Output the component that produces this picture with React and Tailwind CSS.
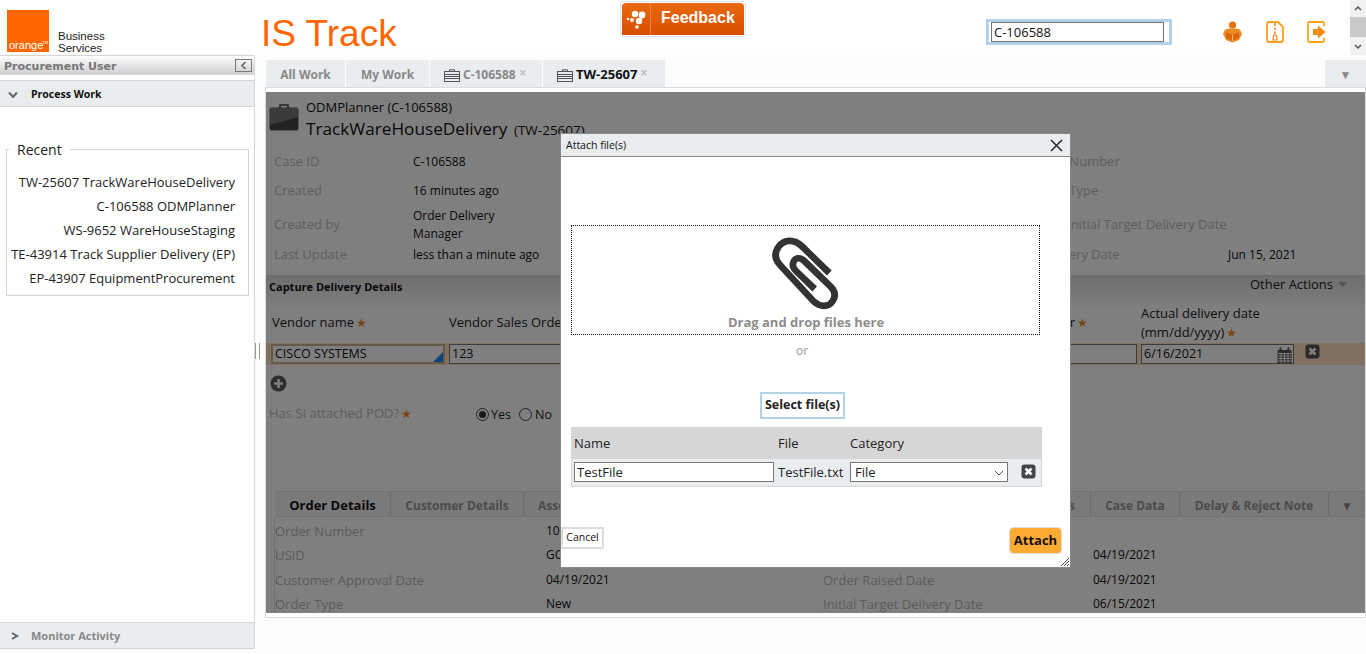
import React from 'react';

const recent = [
  'TW-25607 TrackWareHouseDelivery',
  'C-106588 ODMPlanner',
  'WS-9652 WareHouseStaging',
  'TE-43914 Track Supplier Delivery (EP)',
  'EP-43907 EquipmentProcurement',
];

const Chevron = ({ dir = 'down', className = '' }) => (
  <svg width="10" height="8" viewBox="0 0 10 8" className={className}>
    <path
      d={dir === 'down' ? 'M1 1.5 L5 6 L9 1.5' : 'M2 1 L7 4 L2 7'}
      fill="none"
      stroke="#666"
      strokeWidth="2"
    />
  </svg>
);

const CloseBox = ({ fill = '#444' }) => (
  <svg width="15" height="15" viewBox="0 0 15 15">
    <rect x="0.5" y="0.5" width="14" height="14" rx="3" fill={fill} />
    <path d="M4.5 4.5 L10.5 10.5 M10.5 4.5 L4.5 10.5" stroke="#fff" strokeWidth="2.6" />
  </svg>
);

const TabCase = () => (
  <svg width="16" height="13" viewBox="0 0 16 13" className="mr-[3px]">
    <path d="M5.5 2 V0.8 H10.5 V2" fill="none" stroke="#555" strokeWidth="1" />
    <rect x="0.5" y="2.5" width="15" height="10" fill="none" stroke="#555" strokeWidth="1" />
    <path d="M1 5.5 H15 M1 7.5 H15 M1 9.5 H15" stroke="#555" strokeWidth="1" />
  </svg>
);

const Req = () => <span className="text-[#f08a1d] text-[12px] ml-[2px]">★</span>;

const InfoRow = ({ h, label, value, rightLabel, rightPad, rightValue }) => (
  <div className={`flex items-center ${h}`}>
    <div className="w-[139px] text-[13px] text-[#bcbcbc]">{label}</div>
    <div className="w-[617px] text-[12px] text-[#111] leading-[18px]">{value}</div>
    <div className={`w-[198px] text-[13px] text-[#bcbcbc] whitespace-nowrap ${rightPad}`}>{rightLabel}</div>
    <div className="text-[12px] text-[#111]">{rightValue}</div>
  </div>
);

const DetailRow = ({ label, value, label2, value2 }) => (
  <div className="flex items-center h-[24.3px] leading-[16px]">
    <div className="w-[271px] text-[#b8b8b8] text-[13px]">{label}</div>
    <div className="w-[277px] text-[#111] text-[12px]">{value}</div>
    <div className="w-[270px] text-[#b8b8b8] text-[13px]">{label2}</div>
    <div className="text-[#111] text-[12px]">{value2}</div>
  </div>
);

const Modal = () => (
  <div className="absolute left-[560px] top-[133px] w-[511px] h-[435px] bg-white border border-[#888] flex flex-col text-[#222]">
    <div className="h-[23px] shrink-0 bg-[#e9edf0] border-b border-[#888] flex items-center justify-between pl-[5px] pr-[7px] text-[10.5px] text-[#111]">
      <span className="pt-[1px]">Attach file(s)</span>
      <svg width="13" height="13" viewBox="0 0 13 13">
        <path d="M1 1 L12 12 M12 1 L1 12" stroke="#222" strokeWidth="1.5" />
      </svg>
    </div>

    <div className="mt-[68px] ml-[10px] w-[469px] h-[110px] border border-dotted border-[#111] flex flex-col items-center shrink-0">
      <svg width="70" height="77" viewBox="630 310 210 231" className="mt-[9px] mb-[1px] ml-[-2px]">
        <path
          d="M808 424 L725 343 C703 322 672 322 656 345 C641 366 646 385 660 400 L762 510 C780 527 805 527 817 510 C829 493 825 478 812 465 L733 388 C720 375 705 378 700 392 C696 403 700 410 708 418 L764 472"
          fill="none"
          stroke="#333"
          strokeWidth="20"
        />
      </svg>
      <div className="text-[13px] font-bold text-[#8c8c8c] leading-[18px] ml-[1px]">Drag and drop files here</div>
    </div>

    <div className="ml-[235px] mt-[7px] text-[12px] text-[#999] leading-[18px]">or</div>

    <button className="ml-[199px] mt-[32px] w-[85px] h-[27px] border-2 border-[#b1d2e8] bg-white text-[12.5px] font-bold text-[#222]">
      Select file(s)
    </button>

    <div className="ml-[10px] mt-[8px] w-[471px] text-[13px]">
      <div className="h-[31px] bg-[#d6d6d6] flex items-center pl-[3px] pt-[2px]">
        <div className="w-[204px]">Name</div>
        <div className="w-[72px]">File</div>
        <div>Category</div>
      </div>
      <div className="h-[29px] bg-[#e9edf0] border border-[#d6d6d6] flex items-center pl-[2px]">
        <input
          readOnly
          defaultValue="TestFile"
          className="w-[200px] h-[20px] -mt-[1px] bg-white border border-[#777] px-[2px] text-[13px] outline-none"
        />
        <div className="w-[76px] pl-[4px] whitespace-nowrap">TestFile.txt</div>
        <div className="relative w-[158px] h-[20px] -mt-[1px]">
          <select className="w-full h-full appearance-none bg-white border border-[#777] pl-[4px] text-[13px] outline-none">
            <option>File</option>
          </select>
          <svg width="10" height="6" viewBox="0 0 10 6" className="absolute right-[4px] top-[8px]">
            <path d="M1 1 L5 5 L9 1" fill="none" stroke="#555" strokeWidth="1" />
          </svg>
        </div>
        <div className="ml-[13px] -mt-[2px]">
          <CloseBox />
        </div>
      </div>
    </div>

    <div className="flex items-start justify-between mt-[40px] pr-[9px]">
      <button className="w-[43px] h-[22px] border-[2.5px] border-[#dcdcdc] bg-white text-[10.5px] text-[#111]">
        Cancel
      </button>
      <button className="mt-[1px] w-[51px] h-[25px] rounded-[3px] bg-[#ffab33] outline-1 outline-[#dcdcdc] text-[13px] font-bold text-[#111]">
        Attach
      </button>
    </div>

    <svg width="10" height="10" viewBox="0 0 10 10" className="absolute right-[0px] bottom-[0px]">
      <path d="M1 9 L9 1 M4 9 L9 4 M7 9 L9 7" stroke="#444" strokeWidth="1" />
    </svg>
  </div>
);

export default function App() {
  return (
    <div className="relative w-[1366px] h-[654px] overflow-hidden bg-[#fcfcfc] font-['Open_Sans',sans-serif] text-[#111]">
      {/* Header */}
      <div className="h-[55px] bg-white flex items-start">
        <div className="w-[261px] pl-[7px] pt-[10px] flex">
          <div className="relative w-[42px] h-[42px] bg-[#ff6600]">
            <span className="absolute left-[2px] bottom-[1px] text-[11px] leading-[12px] text-white font-['Liberation_Sans',sans-serif]">
              orange
            </span>
            <span className="absolute right-[1px] bottom-[7px] text-[4px] leading-[4px] text-white font-['Liberation_Sans',sans-serif]">
              TM
            </span>
          </div>
          <div className="ml-[9px] mt-[20px] text-[11.5px] leading-[12px] text-[#222] font-['Liberation_Sans',sans-serif]">
            <div>Business</div>
            <div>Services</div>
          </div>
        </div>

        <div className="w-[359px] text-[37px] leading-[44px] mt-[12px] text-[#ff6600] font-['Liberation_Sans',sans-serif]">
          IS Track
        </div>

        <div className="w-[366px] pt-[1px]">
          <div className="w-[126px] h-[36px] border border-[#e4e4e4] rounded-[3px] p-[1px] bg-white">
            <div className="h-full rounded-t-[4px] bg-linear-to-b from-[#e96a10] to-[#d84c00] flex items-center">
              <svg width="28" height="20" viewBox="0 0 28 20" className="shrink-0">
                <circle cx="13" cy="5" r="3.2" fill="#fff" />
                <circle cx="20" cy="6" r="3.4" fill="#fff" />
                <circle cx="10" cy="11" r="2" fill="#fff" />
                <circle cx="17" cy="12" r="3.2" fill="#fff" />
                <circle cx="15" cy="18" r="1.8" fill="#fff" />
                <circle cx="6" cy="10" r="1.2" fill="#fff" />
              </svg>
              <div className="w-[1px] h-full bg-[#e8844a]" />
              <span className="ml-[10px] -mt-[2px] text-[16px] font-bold text-white font-['Liberation_Sans',sans-serif]">Feedback</span>
            </div>
          </div>
        </div>

        <div className="mt-[19px] w-[186px] h-[26px] border-[3px] border-[#b1d2e8] pl-[2px] flex items-center">
          <input
            readOnly
            defaultValue="C-106588"
            className="w-[173px] h-[20px] border border-[#777] bg-white px-[2px] text-[13px] outline-none"
          />
        </div>

        <div className="ml-[50px] mt-[21px] flex items-start">
          <svg width="21" height="22" viewBox="0 0 21 22">
            <circle cx="10.5" cy="4" r="3.6" fill="#e8700f" />
            <path d="M3 8.5 C6 7 15 7 18 8.5 L20 13 L17 19 L10.5 21.5 L4 19 L1 13 Z" fill="#f08a24" />
            <path d="M4 11 L10.5 14 L17 11 L17 17 L10.5 20 L4 17 Z" fill="#e0660a" />
            <path d="M10.5 14 V20" stroke="#ffc27f" strokeWidth="1" />
          </svg>
          <svg width="18" height="22" viewBox="0 0 18 22" className="ml-[23px]">
            <path d="M3 1 H12 L17 6 V19 Q17 21 15 21 H3 Q1 21 1 19 V3 Q1 1 3 1 Z" fill="#fff" stroke="#ff9f1c" strokeWidth="1.8" />
            <path d="M9 2 V5 M9 6.5 V9 M9 10.5 V13" stroke="#e8851a" strokeWidth="1.5" />
            <path d="M7.5 14 H10.5 L11 19 H7 Z" fill="none" stroke="#e8851a" strokeWidth="1.2" />
          </svg>
          <svg width="19" height="22" viewBox="0 0 19 22" className="ml-[23px]">
            <path d="M17 5 V2.5 Q17 1 15.5 1 H2.5 Q1 1 1 2.5 V19.5 Q1 21 2.5 21 H15.5 Q17 21 17 19.5 V17" fill="none" stroke="#ff9f1c" strokeWidth="1.8" />
            <path d="M6 8 H11 V4.5 L18.5 11 L11 17.5 V14 H6 Z" fill="#f58a0b" />
          </svg>
        </div>

        <div className="ml-auto w-[16px] h-[55px] bg-[#f1f1f1] flex flex-col items-center">
          <svg width="10" height="17" viewBox="0 0 10 17">
            <path d="M2 10 L5 7 L8 10" fill="none" stroke="#555" strokeWidth="1.5" />
          </svg>
          <div className="w-[16px] h-[20px] bg-[#c9c9c9]" />
          <svg width="10" height="18" viewBox="0 0 10 18">
            <path d="M2 8 L5 11 L8 8" fill="none" stroke="#555" strokeWidth="1.5" />
          </svg>
        </div>
      </div>

      <div className="flex items-start">
        {/* Left panel */}
        <aside className="w-[255px] h-[594px] flex flex-col bg-white border-r border-[#d8d8d8]">
          <div className="h-[20px] shrink-0 border-y border-[#d5d5d5] bg-linear-to-b from-white to-[#cfcfcf] flex items-center justify-between pl-[4px] pr-[2px]">
            <span className="pt-[5px] text-[11px] font-bold text-[#777] font-['DejaVu_Sans',sans-serif]">Procurement User</span>
            <div className="w-[17px] h-[13px] border border-[#777] flex items-center justify-center">
              <svg width="7" height="9" viewBox="0 0 7 9">
                <path d="M5.5 1 L2 4.5 L5.5 8" fill="none" stroke="#666" strokeWidth="1.6" />
              </svg>
            </div>
          </div>
          <div className="mt-[5px] h-[27px] shrink-0 bg-[#e9edf0] border-y border-[#d5d5d5] flex items-center pl-[8px] pt-[2px]">
            <Chevron />
            <span className="ml-[13px] text-[10.5px] font-bold text-[#111]">Process Work</span>
          </div>

          <fieldset className="mt-[33px] ml-[6px] mr-[5px] h-[156px] border border-[#d5d5d5] pt-[12px] text-[13px] text-[#222]">
            <legend className="ml-[2px] px-[8px] text-[14px] leading-[19px]">Recent</legend>
            {recent.map((r) => (
              <div key={r} className="h-[24px] flex items-center justify-end pr-[13px] whitespace-nowrap">
                {r}
              </div>
            ))}
          </fieldset>

          <div className="mt-auto h-[27px] shrink-0 bg-[#e9edf0] border-y border-[#d5d5d5] flex items-center pl-[10px] pt-[1px]">
            <Chevron dir="right" />
            <span className="ml-[11px] text-[11px] font-bold text-[#888]">Monitor Activity</span>
          </div>
        </aside>

        {/* Main */}
        <main className="flex-1 ml-[11px] pt-[5px] relative">
          <div className="w-[5px] h-[16px] absolute -left-[11px] top-[288px] border-x border-[#999]" />
          <div className="h-[27px] flex text-[12px] font-bold text-[#888]">
            <div className="w-[79px] bg-[#e9edf0] flex items-center justify-center pt-[3px]">All Work</div>
            <div className="ml-[1px] w-[83px] bg-[#e9edf0] flex items-center justify-center pt-[3px]">My Work</div>
            <div className="ml-[1px] w-[112px] bg-[#e9edf0] flex items-center pl-[14px] pt-[3px]">
              <TabCase />
              <span>C-106588</span>
              <span className="ml-[3px] -mt-[5px] text-[9px] text-[#bbb]">✕</span>
            </div>
            <div className="ml-[1px] w-[122px] bg-[#e9edf0] flex items-center pl-[14px] pt-[3px] text-[#111]">
              <TabCase />
              <span className="text-[13px]">TW-25607</span>
              <span className="ml-[3px] -mt-[5px] text-[9px] text-[#bbb]">✕</span>
            </div>
            <div className="ml-auto w-[41px] bg-[#e9edf0] flex items-center justify-center pt-[3px] text-[#888]">▼</div>
          </div>

          <div className="-ml-[1px] h-[531px] border border-[#dcdcdc] bg-white pt-[4px]">
            <div className="relative h-[521px] overflow-hidden bg-white">
              <div className="pl-[8px]">
                <div className="flex -ml-[5px] pt-[6px]">
                  <svg width="30" height="28" viewBox="0 0 30 28" className="mt-[5px] shrink-0">
                    <path d="M11 5 V2 H19 V5" fill="none" stroke="#444" strokeWidth="1.5" />
                    <rect x="1" y="5" width="28" height="22" rx="1" fill="#444" stroke="#555" />
                    <path d="M1 5 H29 V14 L1 22 Z" fill="#777" />
                  </svg>
                  <div className="ml-[7px]">
                    <div className="text-[13px] leading-[18px] text-[#111]">ODMPlanner (C-106588)</div>
                    <div className="mt-[1px] text-[17.2px] leading-[24px] text-[#111] whitespace-nowrap">
                      TrackWareHouseDelivery <span className="ml-[2px] text-[13.5px]">(TW-25607)</span>
                    </div>
                  </div>
                </div>

                <InfoRow h="h-[29px] mt-[5px]" label="Case ID" value="C-106588" rightLabel="Order Number" rightPad="" />
                <InfoRow h="h-[30px]" label="Created" value="16 minutes ago" rightLabel="Order Type" rightPad="" />
                <InfoRow
                  h="h-[38px]"
                  label="Created by"
                  value={
                    <>
                      Order Delivery
                      <br />
                      Manager
                    </>
                  }
                  rightLabel="Initial Target Delivery Date"
                  rightPad="pl-[37px]"
                />
                <InfoRow
                  h="h-[21px]"
                  label="Last Update"
                  value="less than a minute ago"
                  rightLabel="Delivery Date"
                  rightPad="pl-[9px]"
                  rightValue="Jun 15, 2021"
                />
              </div>

              {/* Capture section */}
              <div className="mt-[10px] h-[35px] bg-linear-to-b from-[#dcdcdc] to-white flex items-start justify-between pl-[3px] pr-[18px]">
                <span className="text-[11px] font-bold text-[#111] leading-[24px]">Capture Delivery Details</span>
                <span className="flex items-center text-[13px] leading-[18px] text-[#222]">
                  Other Actions
                  <svg width="9" height="5" viewBox="0 0 9 5" className="ml-[5px]">
                    <path d="M0 0 H9 L4.5 5 Z" fill="#aaa" />
                  </svg>
                </span>
              </div>

              <div className="h-[33px] flex items-end text-[13px] text-[#222] leading-[19px] pb-[1px]">
                <div className="w-[183px] pl-[6px] pb-[10px]">
                  Vendor name
                  <Req />
                </div>
                <div className="w-[511px] pb-[10px] whitespace-nowrap">Vendor Sales Order</div>
                <div className="w-[128px] pb-[10px] text-right whitespace-nowrap">
                  Number
                  <Req />
                </div>
                <div className="ml-[53px] whitespace-nowrap">
                  Actual delivery date
                  <br />
                  (mm/dd/yyyy)
                  <Req />
                </div>
              </div>

              <div className="h-[22px] bg-[#ffe0c0] flex items-center text-[12.5px]">
                <div className="relative ml-[5px] w-[174px] h-[20px] bg-white border-2 border-[#d0b090] pl-[2px] leading-[16px]">
                  CISCO SYSTEMS
                  <svg width="10" height="10" viewBox="0 0 10 10" className="absolute right-0 bottom-0">
                    <path d="M10 0 V10 H0 Z" fill="#1a8cff" />
                  </svg>
                </div>
                <div className="ml-[4px] w-[510px] h-[20px] bg-white border border-[#777] pl-[2px] leading-[18px]">123</div>
                <div className="ml-[4px] w-[174px] h-[20px] bg-white border border-[#777]" />
                <div className="relative ml-[4px] w-[153px] h-[20px] bg-white border border-[#777] pl-[2px] leading-[18px]">
                  6/16/2021
                  <svg width="15" height="16" viewBox="0 0 15 16" className="absolute right-[1px] top-[2px]">
                    <rect x="0.5" y="3" width="14" height="13" fill="#555" />
                    <path d="M3.5 0.5 V4 M11.5 0.5 V4" stroke="#555" strokeWidth="2" />
                    <path d="M1 6.5 H14 M1 9 H14 M1 11.5 H14 M1 14 H14 M4 6 V16 M7.5 6 V16 M11 6 V16" stroke="#fff" strokeWidth="1" />
                  </svg>
                </div>
                <div className="ml-[11px] -mt-[6px]">
                  <CloseBox fill="#555" />
                </div>
              </div>

              <svg width="17" height="17" viewBox="0 0 17 17" className="ml-[4px] mt-[10px]">
                <circle cx="8.5" cy="8.5" r="8" fill="#5a5a5a" />
                <path d="M8.5 4 V13 M4 8.5 H13" stroke="#fff" strokeWidth="2.6" />
              </svg>

              <div className="mt-[11px] h-[22px] flex items-center pl-[3px] text-[13px]">
                <div className="w-[207px] text-[#bcbcbc]">
                  Has SI attached POD?
                  <Req />
                </div>
                <div className="w-[13px] h-[13px] rounded-full border border-[#444] bg-white flex items-center justify-center">
                  <div className="w-[7px] h-[7px] rounded-full bg-[#333]" />
                </div>
                <span className="ml-[2px] pt-[2px] text-[12.5px] text-[#222]">Yes</span>
                <div className="ml-[8px] w-[13px] h-[13px] rounded-full border border-[#444] bg-white" />
                <span className="ml-[3px] pt-[2px] text-[12.5px] text-[#222]">No</span>
              </div>

              {/* Lower tabs */}
              <div className="mt-[66px] ml-[9px] h-[26px] flex text-[12px] font-bold text-[#999] border-y border-[#e2e2e2] bg-[#f5f5f5]">
                <div className="w-[116px] border-r border-[#ddd] flex items-center justify-center pt-[3px] text-[13px] text-[#111]">Order Details</div>
                <div className="w-[133px] border-r border-[#ddd] flex items-center justify-center pt-[3px]">Customer Details</div>
                <div className="w-[567px] border-r border-[#ddd] flex items-center pl-[14px] pt-[3px]">
                  <span>Assets</span>
                  <span className="ml-auto pr-[15px]">Milestones</span>
                </div>
                <div className="w-[89px] border-r border-[#ddd] flex items-center justify-center pt-[3px]">Case Data</div>
                <div className="w-[149px] border-r border-[#ddd] flex items-center justify-center pt-[3px]">Delay &amp; Reject Note</div>
                <div className="flex-1 flex items-center justify-center pt-[3px] text-[#888]">▼</div>
              </div>

              <div className="ml-[8px] pt-[2px] border-l border-[#ddd]">
                <DetailRow label="Order Number" value="10" />
                <DetailRow label="USID" value="GC" value2="04/19/2021" />
                <DetailRow label="Customer Approval Date" value="04/19/2021" label2="Order Raised Date" value2="04/19/2021" />
                <DetailRow label="Order Type" value="New" label2="Initial Target Delivery Date" value2="06/15/2021" />
              </div>

              <div className="absolute inset-0 bg-black/50" />
            </div>
          </div>
        </main>
      </div>

      <Modal />
    </div>
  );
}
